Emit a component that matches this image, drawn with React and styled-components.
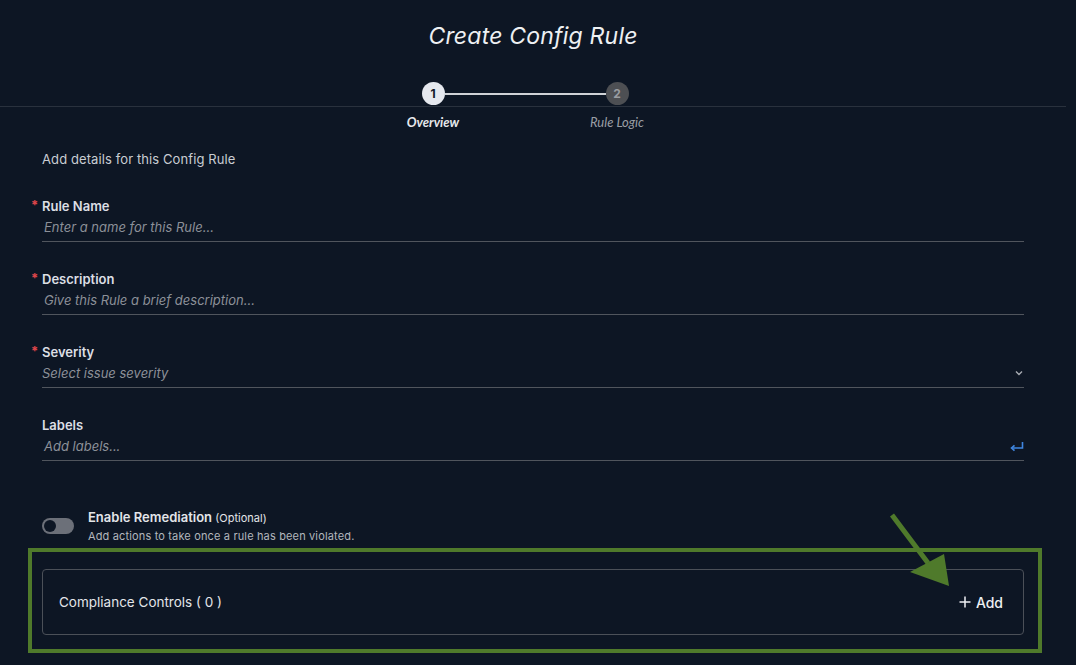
import React from "react";
import styled, { createGlobalStyle } from "styled-components";

const Global = createGlobalStyle`
  html, body { margin: 0; padding: 0; background: #0d1624; }
  body { font-family: "Inter", "Liberation Sans", sans-serif; color: #d9dce1; }
  * { box-sizing: border-box; }
`;

const Page = styled.div`
  width: 1066px;
  height: 665px;
  background: #0d1624;
  overflow: hidden;
`;

const Header = styled.header`
  border-bottom: 1px solid #29313d;
  padding-top: 20px;
  width: 1076px;
`;

const Title = styled.h1`
  width: 1066px;
  margin: 0;
  text-align: center;
  font-size: 23px;
  line-height: 32px;
  font-weight: 400;
  font-style: italic;
  color: #eef0f3;
  letter-spacing: 0.2px;
`;

const Track = styled.div`
  width: 1066px;
  display: flex;
  justify-content: center;
  align-items: center;
  padding-right: 16px;
  margin-top: 30px;
  margin-bottom: 1px;
`;

const Circle = styled.div`
  width: 23px;
  height: 23px;
  border-radius: 50%;
  display: flex;
  align-items: center;
  justify-content: center;
  font-size: 12px;
  font-weight: 700;
  background: ${(p) => (p.$active ? "#e5e8ee" : "#4d4f53")};
  color: ${(p) => (p.$active ? "#111827" : "#9a9da2")};
`;

const Connector = styled.div`
  width: 161px;
  height: 2px;
  background: #cfd2d6;
`;

const Labels = styled.div`
  width: 1066px;
  display: flex;
  justify-content: center;
  padding-right: 16px;
  margin-top: 7px;
`;

const StepLabel = styled.div`
  width: 184px;
  text-align: center;
  font-size: 13px;
  line-height: 16px;
  font-style: italic;
  font-weight: ${(p) => (p.$active ? 700 : 400)};
  color: ${(p) => (p.$active ? "#e6e8ec" : "#9a9ea5")};
  font-family: "Lato", "Inter", sans-serif;
`;

const Body = styled.main`
  padding: 0 42px;
`;

const Intro = styled.p`
  margin: 21px 0 0;
  font-size: 13px;
  line-height: 16px;
  color: #c9cdd3;
  letter-spacing: 0.1px;
`;

const Field = styled.div`
  margin-top: ${(p) => p.$top || 29}px;
`;

const Label = styled.label`
  position: relative;
  display: block;
  font-size: 13px;
  line-height: 16px;
  font-weight: 600;
  color: #dcdfe4;
`;

const Req = styled.span`
  position: absolute;
  left: -11px;
  top: -1px;
  color: #e0464b;
  font-weight: 700;
`;

const InputRow = styled.div`
  display: flex;
  align-items: center;
  justify-content: space-between;
  height: 28px;
  padding-bottom: 1px;
  border-bottom: 1px solid #50555d;
  padding-left: ${(p) => (p.$flush ? 0 : 2)}px;
`;

const Placeholder = styled.span`
  font-size: 13px;
  font-style: italic;
  color: #8c9098;
`;

const Toggle = styled.div`
  width: 32px;
  height: 16px;
  border-radius: 8px;
  background: #6c7079;
  padding: 2px;
  display: flex;
  &::after {
    content: "";
    width: 12px;
    height: 12px;
    border-radius: 50%;
    background: #0d1624;
  }
`;

const ToggleRow = styled.div`
  display: flex;
  align-items: center;
  gap: 14px;
  margin-top: 48px;
`;

const ToggleText = styled.div`
  display: flex;
  flex-direction: column;
  gap: 3px;
`;

const ToggleTitle = styled.div`
  font-size: 13px;
  line-height: 16px;
  font-weight: 600;
  color: #e3e5e9;
  span {
    font-weight: 400;
    font-size: 11px;
  }
`;

const ToggleSub = styled.div`
  font-size: 11px;
  line-height: 14px;
  color: #b3b7bd;
  letter-spacing: 0.15px;
`;

const Section = styled.section`
  position: relative;
  margin-top: 26px;
`;

const Card = styled.div`
  height: 66px;
  border: 1px solid #4b5058;
  border-radius: 4px;
  display: flex;
  align-items: center;
  justify-content: space-between;
  padding: 0 20px 0 16px;
`;

const CardTitle = styled.span`
  font-size: 13.5px;
  color: #e3e5e9;
`;

const AddButton = styled.button`
  background: none;
  border: none;
  display: flex;
  align-items: center;
  gap: 5px;
  padding: 0;
  font-family: inherit;
  font-size: 14px;
  font-weight: 500;
  color: #eef0f3;
`;

const Highlight = styled.div`
  position: absolute;
  left: -14px;
  right: -18px;
  top: -21px;
  bottom: -18px;
  border: 4px solid #4f7a2b;
  pointer-events: none;
`;

const Arrow = styled.svg`
  position: absolute;
  left: 846px;
  top: -56px;
  pointer-events: none;
`;

function Chevron() {
  return (
    <svg width="10" height="10" viewBox="0 0 10 10">
      <path d="M2 3.5 L5 6.5 L8 3.5" fill="none" stroke="#a8acb2" strokeWidth="1.4" />
    </svg>
  );
}

function EnterIcon() {
  return (
    <svg width="14" height="11" viewBox="0 0 14 11">
      <path d="M12.5 1 V7 H2" fill="none" stroke="#3f86e0" strokeWidth="1.6" />
      <path d="M4.5 4.3 L1.5 7 L4.5 9.7" fill="none" stroke="#3f86e0" strokeWidth="1.6" />
    </svg>
  );
}

function Plus() {
  return (
    <svg width="12" height="12" viewBox="0 0 12 12">
      <path d="M6 0.5 V11.5 M0.5 6 H11.5" stroke="#eef0f3" strokeWidth="1.5" />
    </svg>
  );
}

const fields = [
  { label: "Rule Name", placeholder: "Enter a name for this Rule...", required: true, top: 31 },
  { label: "Description", placeholder: "Give this Rule a brief description...", required: true },
  { label: "Severity", placeholder: "Select issue severity", required: true, select: true },
  { label: "Labels", placeholder: "Add labels...", enter: true },
];

export default function App() {
  return (
    <Page>
      <Global />
      <Header>
        <Title>Create Config Rule</Title>
        <Track>
          <Circle $active>1</Circle>
          <Connector />
          <Circle>2</Circle>
        </Track>
      </Header>
      <Labels>
        <StepLabel $active>Overview</StepLabel>
        <StepLabel>Rule Logic</StepLabel>
      </Labels>
      <Body>
        <Intro>Add details for this Config Rule</Intro>
        {fields.map((f) => (
          <Field key={f.label} $top={f.top}>
            <Label>
              {f.required && <Req>*</Req>}
              {f.label}
            </Label>
            <InputRow $flush={f.select}>
              <Placeholder>{f.placeholder}</Placeholder>
              {f.select && <Chevron />}
              {f.enter && <EnterIcon />}
            </InputRow>
          </Field>
        ))}
        <ToggleRow>
          <Toggle />
          <ToggleText>
            <ToggleTitle>
              Enable Remediation <span>(Optional)</span>
            </ToggleTitle>
            <ToggleSub>Add actions to take once a rule has been violated.</ToggleSub>
          </ToggleText>
        </ToggleRow>
        <Section>
          <Card>
            <CardTitle>Compliance Controls ( 0 )</CardTitle>
            <AddButton>
              <Plus />
              Add
            </AddButton>
          </Card>
          <Highlight />
          <Arrow width="70" height="80" viewBox="0 0 70 80">
            <path d="M4 2 L40 50" stroke="#4f7a2b" strokeWidth="5" />
            <path d="M22 59 L56 41 L61 73 Z" fill="#4f7a2b" />
          </Arrow>
        </Section>
      </Body>
    </Page>
  );
}
